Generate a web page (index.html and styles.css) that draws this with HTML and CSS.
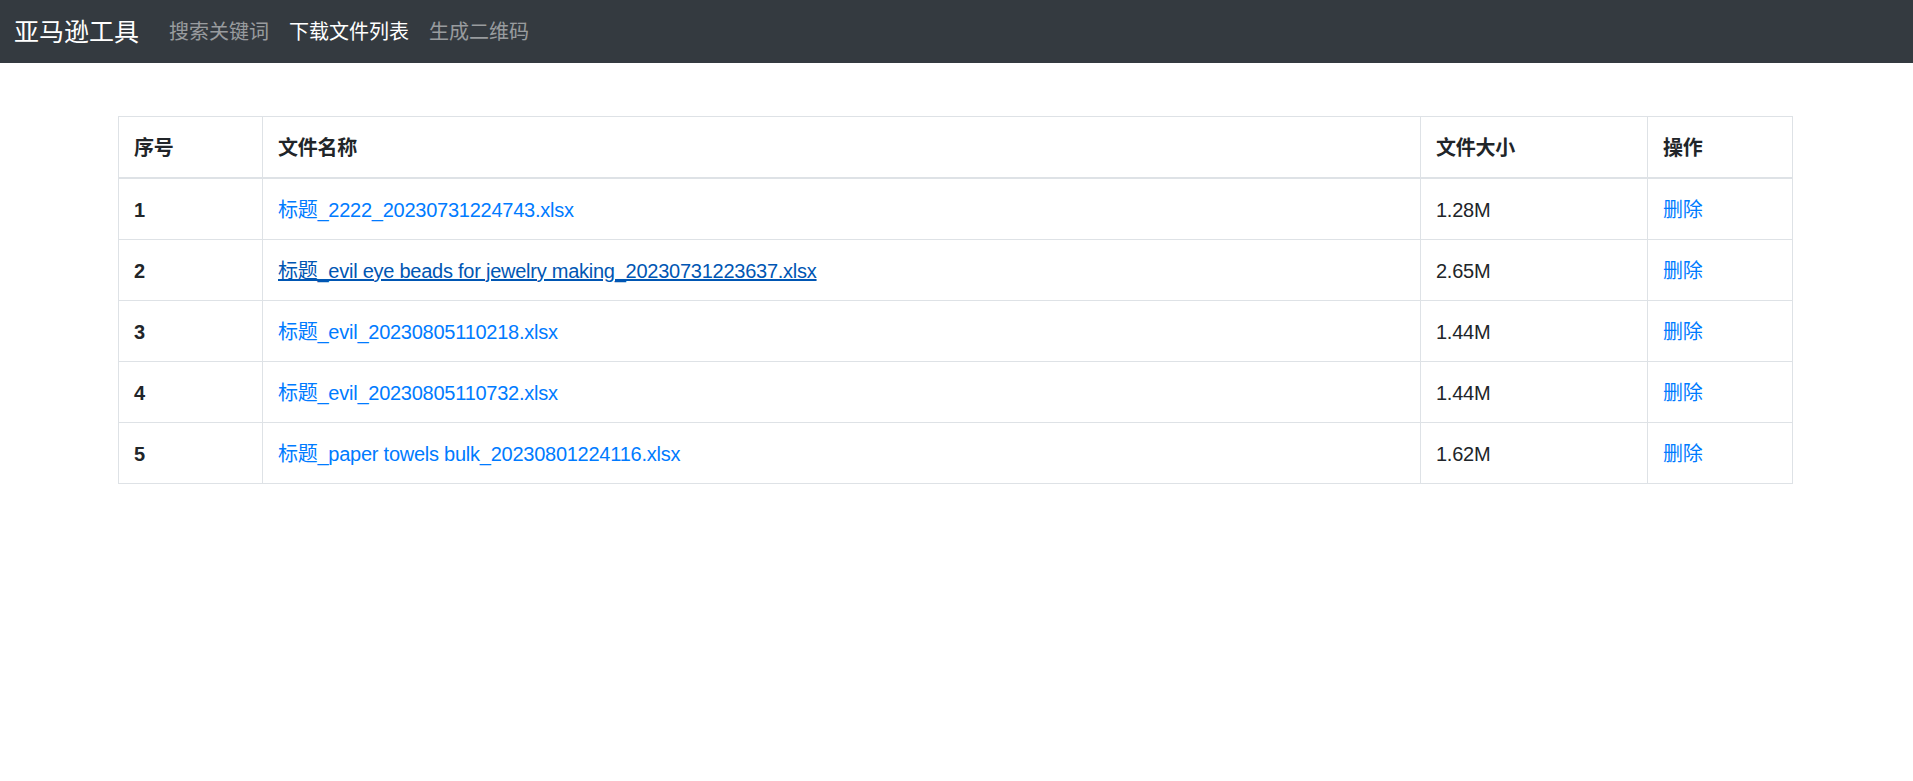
FILE: index.html
```html
<!DOCTYPE html>
<html lang="zh-CN">
<head>
<meta charset="utf-8">
<title>下载文件列表</title>
<link rel="stylesheet" href="styles.css">
</head>
<body>
<nav class="navbar">
  <a class="brand" href="#">亚马逊工具</a>
  <ul class="nav">
    <li><a class="nav-link" href="#">搜索关键词</a></li>
    <li><a class="nav-link active" href="#">下载文件列表</a></li>
    <li><a class="nav-link" href="#">生成二维码</a></li>
  </ul>
</nav>
<main class="content">
  <table class="files">
    <colgroup>
      <col class="c-idx">
      <col class="c-name">
      <col class="c-size">
      <col class="c-op">
    </colgroup>
    <thead>
      <tr><th>序号</th><th>文件名称</th><th>文件大小</th><th>操作</th></tr>
    </thead>
    <tbody>
      <tr><th>1</th><td><a class="link" href="#">标题_2222_20230731224743.xlsx</a></td><td>1.28M</td><td><a class="link" href="#">删除</a></td></tr>
      <tr><th>2</th><td><a class="link hover" href="#">标题_evil eye beads for jewelry making_20230731223637.xlsx</a></td><td>2.65M</td><td><a class="link" href="#">删除</a></td></tr>
      <tr><th>3</th><td><a class="link" href="#">标题_evil_20230805110218.xlsx</a></td><td>1.44M</td><td><a class="link" href="#">删除</a></td></tr>
      <tr><th>4</th><td><a class="link" href="#">标题_evil_20230805110732.xlsx</a></td><td>1.44M</td><td><a class="link" href="#">删除</a></td></tr>
      <tr><th>5</th><td><a class="link" href="#">标题_paper towels bulk_20230801224116.xlsx</a></td><td>1.62M</td><td><a class="link" href="#">删除</a></td></tr>
    </tbody>
  </table>
</main>
</body>
</html>
```

FILE: styles.css
```css
html, body {
  margin: 0;
  padding: 0;
  background: #fff;
}
body {
  font-family: "Liberation Sans", "Noto Sans CJK SC", sans-serif;
  font-size: 20px;
  line-height: 30px;
  color: #212529;
}
.navbar {
  height: 63px;
  background: #343a40;
  display: flex;
  align-items: center;
  padding-left: 14px;
}
.brand {
  font-size: 25px;
  line-height: 36px;
  color: #fff;
  text-decoration: none;
  margin-right: 20px;
}
.nav {
  list-style: none;
  margin: 0;
  padding: 0;
  display: flex;
}
.nav-link {
  display: block;
  padding: 0 10px;
  font-size: 20px;
  line-height: 30px;
  color: rgba(255, 255, 255, 0.5);
  text-decoration: none;
}
.nav-link.active {
  color: #fff;
}
.content {
  padding: 53px 0 0 118px;
}
.files {
  width: 1674px;
  table-layout: fixed;
  border-collapse: collapse;
  letter-spacing: -0.25px;
}
.c-idx { width: 144px; }
.c-name { width: 1158px; }
.c-size { width: 227px; }
.c-op { width: 145px; }
.files th, .files td {
  border: 1px solid #dee2e6;
  padding: 16px 15px 14px;
  text-align: left;
  vertical-align: top;
  line-height: 30px;
}
.files th {
  font-weight: bold;
}
.files thead th {
  border-bottom: 2px solid #dee2e6;
}
.link {
  color: #007bff;
  text-decoration: none;
}
.link.hover {
  color: #0056b3;
  text-decoration: underline;
}
```
